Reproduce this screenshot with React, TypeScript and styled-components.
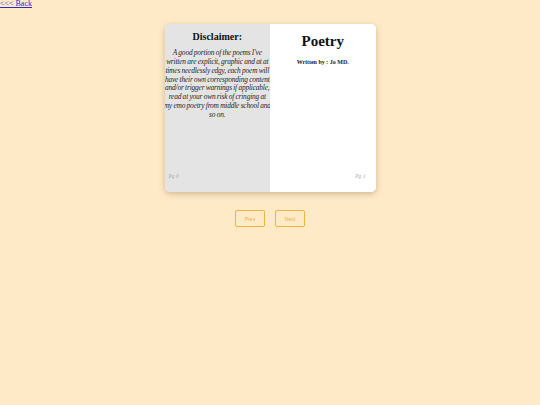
import styled, { createGlobalStyle } from 'styled-components';

const GlobalStyle = createGlobalStyle`
  html, body {
    margin: 0;
    padding: 0;
    background: #ffeac8;
    font-family: "Liberation Serif", "Times New Roman", serif;
  }
`;

const Page = styled.div`
  width: 540px;
  height: 405px;
  display: flex;
  flex-direction: column;
  align-items: center;
`;

const BackLink = styled.a`
  align-self: flex-start;
  font-size: 8px;
  line-height: 8px;
  text-decoration: underline;
  color: #2a2ad0;
`;

const Book = styled.div`
  margin-top: 16px;
  width: 211px;
  height: 168px;
  display: flex;
  border-radius: 5px;
  box-shadow: 0 2px 6px rgba(120, 90, 40, 0.35);
  overflow: hidden;
`;

const Sheet = styled.div<{ $left?: boolean }>`
  flex: 1;
  min-width: 0;
  display: flex;
  flex-direction: column;
  align-items: center;
  background: ${(p) => (p.$left ? '#e4e4e4' : '#ffffff')};
  padding: ${(p) => (p.$left ? '7px 0 0 0' : '8px 0 0 0')};
  position: relative;
`;

const Heading = styled.h2`
  margin: 0;
  font-size: 10px;
  line-height: 12px;
  font-weight: bold;
  color: #111;
`;

const Title = styled.h1`
  margin: 0;
  font-size: 15px;
  line-height: 18px;
  font-weight: bold;
  color: #111;
`;

const Byline = styled.div`
  margin-top: 9px;
  font-size: 6px;
  font-weight: bold;
  color: #222;
`;

const Disclaimer = styled.p`
  margin: 6px 0 0 0;
  font-size: 7.4px;
  line-height: 8.85px;
  letter-spacing: -0.18px;
  word-spacing: -0.25px;
  font-style: italic;
  text-align: center;
  color: #262626;
  white-space: nowrap;
`;

const PageNo = styled.span<{ $left?: boolean }>`
  position: absolute;
  bottom: 13px;
  ${(p) => (p.$left ? 'left: 4px;' : 'right: 10px;')}
  font-size: 5.5px;
  font-style: italic;
  color: #aaa;
`;

const Controls = styled.div`
  margin-top: 18px;
  display: flex;
  gap: 10px;
`;

const NavButton = styled.button`
  width: 30px;
  height: 17px;
  padding: 0;
  background: transparent;
  border: 1px solid #f0b43c;
  border-radius: 2px;
  color: #e8b040;
  font-family: "Liberation Sans", Arial, sans-serif;
  font-size: 5px;
  cursor: pointer;
`;

const lines = [
  "A good portion of the poems I've",
  'written are explicit, graphic and at at',
  'times needlessly edgy, each poem will',
  'have their own corresponding content',
  'and/or trigger warnings if applicable,',
  'read at your own risk of cringing at',
  'my emo poetry from middle school and',
  'so on.',
];

export default function App() {
  return (
    <>
      <GlobalStyle />
      <Page>
        <BackLink href="#">&lt;&lt;&lt; Back</BackLink>
        <Book>
          <Sheet $left>
            <Heading>Disclaimer:</Heading>
            <Disclaimer>
              {lines.map((l, i) => (
                <span key={i}>
                  {l}
                  {i < lines.length - 1 && <br />}
                </span>
              ))}
            </Disclaimer>
            <PageNo $left>Pg 0</PageNo>
          </Sheet>
          <Sheet>
            <Title>Poetry</Title>
            <Byline>Written by : Jo MD.</Byline>
            <PageNo>Pg 1</PageNo>
          </Sheet>
        </Book>
        <Controls>
          <NavButton>Prev</NavButton>
          <NavButton>Next</NavButton>
        </Controls>
      </Page>
    </>
  );
}
